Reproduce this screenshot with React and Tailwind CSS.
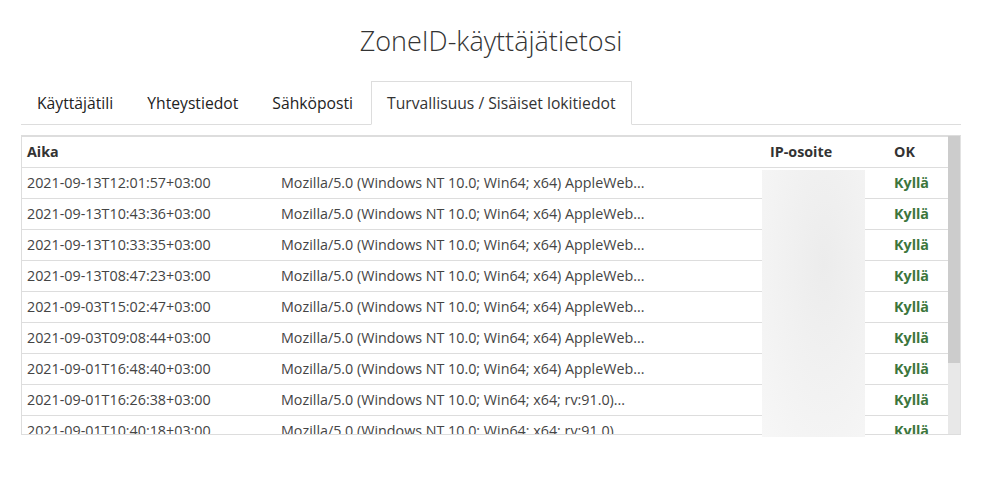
import React from 'react';

const tabs = ['Käyttäjätili', 'Yhteystiedot', 'Sähköposti', 'Turvallisuus / Sisäiset lokitiedot'];

const chrome = 'Mozilla/5.0 (Windows NT 10.0; Win64; x64) AppleWeb...';
const firefox = 'Mozilla/5.0 (Windows NT 10.0; Win64; x64; rv:91.0)...';

const rows = [
  { time: '2021-09-13T12:01:57+03:00', agent: chrome },
  { time: '2021-09-13T10:43:36+03:00', agent: chrome },
  { time: '2021-09-13T10:33:35+03:00', agent: chrome },
  { time: '2021-09-13T08:47:23+03:00', agent: chrome },
  { time: '2021-09-03T15:02:47+03:00', agent: chrome },
  { time: '2021-09-03T09:08:44+03:00', agent: chrome },
  { time: '2021-09-01T16:48:40+03:00', agent: chrome },
  { time: '2021-09-01T16:26:38+03:00', agent: firefox },
  { time: '2021-09-01T10:40:18+03:00', agent: firefox },
  { time: '2021-08-31T14:12:05+03:00', agent: firefox },
];

export default function App() {
  return (
    <div className="w-[990px] h-[478px] bg-white text-[#333] overflow-hidden" style={{ fontFamily: '"Open Sans", sans-serif' }}>
      <div className="mx-[21px] w-[940px]">
        <h1 className="pt-[21px] h-[61px] text-center text-[27px] leading-10 font-light text-[#333]">
          ZoneID-käyttäjätietosi
        </h1>

        <ul className="flex border-b border-[#ddd] mt-[20px]">
          {tabs.map((tab, i) => {
            const active = i === tabs.length - 1;
            return (
              <li
                key={tab}
                className={`-mb-px mr-[2px] px-[15px] py-[10px] text-[15.7px] leading-[22px] border ${
                  active ? 'border-[#ddd] border-b-transparent bg-white text-[#333]' : 'border-transparent text-[#222]'
                }`}
              >
                {tab}
              </li>
            );
          })}
        </ul>

        <div className="relative mt-[10px]">
          <div className="flex h-[300px] border border-[#ddd] border-r-[#e2e2e2]">
            <div className="flex-1 overflow-hidden">
              <table className="w-[926px] table-fixed border-t border-[#ddd] text-[14.3px]">
                <colgroup>
                  <col className="w-[254px]" />
                  <col className="w-[489px]" />
                  <col className="w-[124px]" />
                  <col className="w-[59px]" />
                </colgroup>
                <thead>
                  <tr className="h-[31px] border-b border-[#ddd] text-left font-bold text-[#333]">
                    <th className="px-[5px]">Aika</th>
                    <th className="px-[5px]"></th>
                    <th className="px-[5px]">IP-osoite</th>
                    <th className="px-[5px]">OK</th>
                  </tr>
                </thead>
                <tbody>
                  {rows.map((row) => (
                    <tr key={row.time} className="h-[31px] border-b border-[#ddd] text-[#444]">
                      <td className="px-[5px] whitespace-nowrap">{row.time}</td>
                      <td className="px-[5px] whitespace-nowrap">{row.agent}</td>
                      <td className="px-[5px]"></td>
                      <td className="px-[5px] font-bold text-[#3c763d]">Kyllä</td>
                    </tr>
                  ))}
                </tbody>
              </table>
            </div>
            <div className="w-[12px] flex flex-col bg-[#e8e8e8]">
              <div className="h-[227px] bg-[#cccccc]"></div>
            </div>
          </div>

          {/* hidden IP addresses */}
          <div className="absolute left-[741px] top-[35px] w-[103px] h-[267px] bg-[radial-gradient(ellipse_at_60%_35%,#ececec_0%,#f1f1f1_45%,#f7f7f7_100%)]"></div>
        </div>
      </div>
    </div>
  );
}
